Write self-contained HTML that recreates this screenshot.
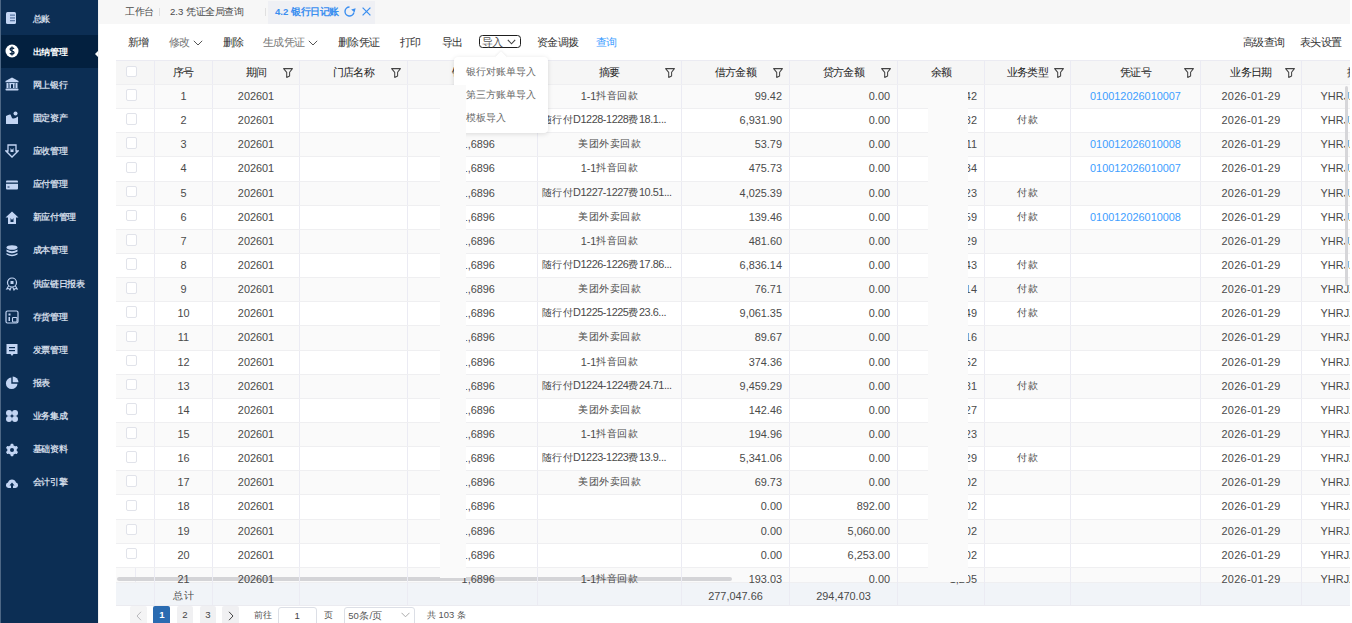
<!DOCTYPE html><html><head><meta charset="utf-8"><style>
*{box-sizing:border-box;margin:0;padding:0}
html,body{width:1352px;height:623px;overflow:hidden;background:#fff;font-family:"Liberation Sans",sans-serif;color:#333}
.a{position:absolute}
#sb{left:0;top:0;width:98px;height:623px;background:#0c2e54;border-left:1px solid #4d6785}
.si{position:absolute;left:0;width:97px;height:33px}
.si .t{position:absolute;left:31.8px;top:-0.3px;line-height:33px;font-size:9.46px;color:#cdd7e4;white-space:nowrap;font-weight:700}
.si.act{background:#03203f}
.si.act .t{color:#fff}
.si svg{position:absolute;left:4px;top:10px;width:14px;height:14px}
#tabs{left:98px;top:0;width:1254px;height:24px;background:#f7f7f7}
.tab{position:absolute;top:-0.5px;height:23px;line-height:23px;font-size:9.6px;color:#4a4a4a;white-space:nowrap;font-weight:500}
.sep{position:absolute;top:8px;width:1px;height:8px;background:#e0e0e0}
.tb{position:absolute;top:34px;line-height:16px;font-size:11px;color:#333;white-space:nowrap;font-weight:500}
.tbl{left:116px;top:60px;width:1233.5px;height:546px;overflow:hidden}
.hd{position:absolute;left:0;top:0;height:24px;width:1300px;background:#f6f6f6;border-top:1px solid #ebebf2}
.row{position:absolute;left:0;height:24.14px;width:1300px;border-top:1px solid #efeff1}
.c{position:absolute;top:0;height:100%;display:flex;align-items:center;justify-content:center;font-size:10.9px;color:#4a4a4a;white-space:nowrap;overflow:hidden;border-left:1px solid #ebebf3;padding-bottom:1px}
.c.r{justify-content:flex-end;padding-right:7px}
.hc{font-weight:500;color:#222;font-size:11px;padding-bottom:1px!important}
.cb{position:absolute;left:10px;top:4.2px;width:11px;height:11.5px;border:1px solid #e1e3ea;border-radius:2px;background:#fff}
.hd .cb{top:4.5px}
.blue{color:#409eff}
.z6{z-index:6}
.tot .c{padding-bottom:0;padding-top:4px}
.k{font-size:10px;letter-spacing:.5px}
.si .k{font-size:9px;letter-spacing:-.4px}
.tab .k{font-size:10px;letter-spacing:-.5px}
.tb .k{font-size:11px;letter-spacing:-.7px}
.hc .k{font-size:11px;letter-spacing:-.7px}
.pop .k{font-size:10px;letter-spacing:0}
.pg .k{font-size:9px;letter-spacing:-.1px}
.flt{position:absolute;top:6.6px;width:10px;height:10px}
</style></head><body>
<div id="sb" class="a">
<div class="si" style="top:1.80px"><svg style="left:3px;top:9px" viewBox="0 0 14 14"><rect x="2" y="1" width="10" height="12" rx="1.5" fill="#c3d5f3"/><rect x="6" y="3.5" width="5" height="1.3" fill="#5d7aa6"/><rect x="6" y="6.3" width="5" height="1.3" fill="#5d7aa6"/><rect x="6" y="9" width="5" height="1.3" fill="#5d7aa6"/></svg><span class="t"><span class="k">总账</span></span></div>
<div class="si act" style="top:34.94px"><svg style="left:3.5px;top:9.5px" viewBox="0 0 14 14"><circle cx="7" cy="7" r="6.5" fill="#fff"/><path d="M9 4.9 C8.6 4.1 7.9 3.8 7 3.8 C5.9 3.8 5.1 4.4 5.1 5.3 C5.1 7.2 9.0 6.5 9.0 8.6 C9.0 9.6 8.1 10.2 7 10.2 C6.1 10.2 5.3 9.8 4.9 9.1 M7 2.6 V11.4" fill="none" stroke="#03203f" stroke-width="1.3"/></svg><span class="t"><span class="k">出纳管理</span></span></div>
<div class="si" style="top:68.08px"><svg style="top:9px" viewBox="0 0 14 14"><path d="M7 0.5 L13.5 4 L13.5 5.2 L0.5 5.2 L0.5 4 Z" fill="#c3d5f3"/><rect x="1.5" y="6" width="2" height="5" fill="#c3d5f3"/><rect x="4.5" y="6" width="1.5" height="5" fill="#c3d5f3"/><rect x="8" y="6" width="1.5" height="5" fill="#c3d5f3"/><rect x="10.5" y="6" width="2" height="5" fill="#c3d5f3"/><rect x="4.5" y="6" width="5" height="1.2" fill="#c3d5f3"/><rect x="0.5" y="11.5" width="13" height="2" rx="0.8" fill="#c3d5f3"/></svg><span class="t"><span class="k">网上银行</span></span></div>
<div class="si" style="top:101.22px"><svg viewBox="0 0 14 14"><path d="M1 5 Q4 3 5.5 3.5 L7 7 Q9 8.5 13 5.5 L13 12.5 Q13 13 12.5 13 L1.5 13 Q1 13 1 12.5 Z" fill="#c3d5f3"/><circle cx="10.5" cy="2.5" r="2" fill="#c3d5f3"/></svg><span class="t"><span class="k">固定资产</span></span></div>
<div class="si" style="top:134.36px"><svg viewBox="0 0 14 14"><path d="M3 1 L11 1 L11 7 L13 7 L7 13 L1 7 L3 7 Z" fill="none" stroke="#c3d5f3" stroke-width="1.3"/><path d="M5.5 4 L7 6 L8.5 4 L8.5 8 L5.5 8 Z" fill="#c3d5f3"/></svg><span class="t"><span class="k">应收管理</span></span></div>
<div class="si" style="top:167.50px"><svg viewBox="0 0 14 14"><rect x="1" y="2.5" width="12" height="9" rx="1" fill="#c3d5f3"/><rect x="1" y="4.5" width="12" height="1.3" fill="#0c2e54"/><rect x="2.5" y="8.5" width="2" height="1" fill="#0c2e54"/></svg><span class="t"><span class="k">应付管理</span></span></div>
<div class="si" style="top:200.64px"><svg viewBox="0 0 14 14"><path d="M7 0.5 L13.5 6.5 L11 6.5 L11 13 L3 13 L3 6.5 L0.5 6.5 Z" fill="#c3d5f3"/><path d="M5.5 7 L7 9 L8.5 7 L8.5 11 L5.5 11 Z" fill="#0c2e54"/></svg><span class="t"><span class="k">新应付管理</span></span></div>
<div class="si" style="top:233.78px"><svg viewBox="0 0 14 14"><ellipse cx="7" cy="3.5" rx="5.5" ry="2.3" fill="#c3d5f3"/><path d="M1.5 5.5 Q7 9 12.5 5.5 L12.5 7.5 Q7 11 1.5 7.5Z" fill="#c3d5f3"/><path d="M1.5 9 Q7 12.5 12.5 9 L12.5 10.5 Q7 14 1.5 10.5Z" fill="#c3d5f3"/></svg><span class="t"><span class="k">成本管理</span></span></div>
<div class="si" style="top:266.92px"><svg viewBox="0 0 14 14"><circle cx="7" cy="5.5" r="4.5" fill="none" stroke="#c3d5f3" stroke-width="1.2"/><rect x="5.5" y="4" width="3" height="3" fill="#c3d5f3"/><path d="M3.8 8.5 L1.8 12 L4 11.5 L5 13 L6.3 10" fill="none" stroke="#c3d5f3" stroke-width="1.1"/><path d="M10.2 8.5 L12.2 12 L10 11.5 L9 13 L7.7 10" fill="none" stroke="#c3d5f3" stroke-width="1.1"/></svg><span class="t"><span class="k">供应链日报表</span></span></div>
<div class="si" style="top:300.06px"><svg viewBox="0 0 14 14"><rect x="1" y="1" width="12" height="12" rx="1.5" fill="none" stroke="#c3d5f3" stroke-width="1.2"/><rect x="3.5" y="3.5" width="2" height="2" fill="#c3d5f3"/><rect x="3.5" y="7" width="1.5" height="4" fill="#c3d5f3"/><rect x="7.5" y="7.5" width="4.5" height="4.5" rx="0.8" fill="none" stroke="#c3d5f3" stroke-width="1.1"/></svg><span class="t"><span class="k">存货管理</span></span></div>
<div class="si" style="top:333.20px"><svg viewBox="0 0 14 14"><path d="M1.5 1 L12.5 1 L12.5 11 L8.5 11 L7 13 L5.5 11 L1.5 11 Z" fill="#c3d5f3"/><rect x="4" y="4" width="6" height="1.2" fill="#0c2e54"/><rect x="4" y="7" width="6" height="1.2" fill="#0c2e54"/></svg><span class="t"><span class="k">发票管理</span></span></div>
<div class="si" style="top:366.34px"><svg viewBox="0 0 14 14"><path d="M6.3 1.5 A5.8 5.8 0 1 0 12.5 7.7 L6.3 7.7 Z" fill="#c3d5f3"/><path d="M7.7 0.5 A5.8 5.8 0 0 1 13.5 6.3 L7.7 6.3 Z" fill="#c3d5f3"/></svg><span class="t"><span class="k">报表</span></span></div>
<div class="si" style="top:399.48px"><svg viewBox="0 0 14 14"><circle cx="4" cy="4" r="3" fill="#c3d5f3"/><circle cx="10" cy="4" r="3" fill="#c3d5f3"/><circle cx="4" cy="10" r="3" fill="#c3d5f3"/><circle cx="10" cy="10" r="3" fill="#c3d5f3"/></svg><span class="t"><span class="k">业务集成</span></span></div>
<div class="si" style="top:432.62px"><svg viewBox="0 0 14 14"><g fill="#c3d5f3"><circle cx="7" cy="7" r="4.8"/><rect x="5.6" y="0.8" width="2.8" height="12.4" rx="0.6"/><rect x="5.6" y="0.8" width="2.8" height="12.4" rx="0.6" transform="rotate(60 7 7)"/><rect x="5.6" y="0.8" width="2.8" height="12.4" rx="0.6" transform="rotate(120 7 7)"/></g><circle cx="7" cy="7" r="2" fill="#0c2e54"/></svg><span class="t"><span class="k">基础资料</span></span></div>
<div class="si" style="top:465.76px"><svg viewBox="0 0 14 14"><path d="M3.5 12 A2.8 2.8 0 0 1 3 6.5 A4.2 4.2 0 0 1 11 6.5 A2.8 2.8 0 0 1 10.5 12 Z" fill="#c3d5f3"/><path d="M7 6.5 L4.5 9.5 L6 9.5 L6 12 L8 12 L8 9.5 L9.5 9.5 Z" fill="#0c2e54"/></svg><span class="t"><span class="k">会计引擎</span></span></div>
<svg class="a" style="left:92.5px;top:48.8px" width="6" height="10" viewBox="0 0 6 10"><path d="M6 0 L1 5 L6 10 Z" fill="#fff"/></svg>
</div>
<div id="tabs" class="a">
<div class="tab" style="left:27px"><span class="k">工作台</span></div><div class="sep" style="left:61px"></div>
<div class="tab" style="left:72px">2.3 <span class="k">凭证全局查询</span></div><div class="sep" style="left:167px"></div>
<div class="a" style="left:170px;top:1px;width:107px;height:23px;background:#eff0f4"></div>
<div class="tab" style="left:177px;color:#3a8ef0;font-weight:700">4.2 <span class="k">银行日记账</span></div>
<svg class="a" style="left:245px;top:5px" width="13" height="13" viewBox="0 0 13 13"><path d="M6.5 2 A4.5 4.5 0 1 0 10.9 7.5" fill="none" stroke="#3a8ef0" stroke-width="1.4"/><path d="M8.2 4.6 L12.6 3.2 L11.6 7.6 Z" fill="#3a8ef0"/></svg>
<svg class="a" style="left:264px;top:7px" width="9" height="9" viewBox="0 0 9 9"><path d="M0.6 0.6 L8.4 8.4 M8.4 0.6 L0.6 8.4" stroke="#3a8ef0" stroke-width="1.25"/></svg>
</div>
<div class="tb" style="left:128px"><span class="k">新增</span></div>
<div class="tb" style="left:169px;color:#767676"><span class="k">修改</span></div>
<div class="tb" style="left:223px"><span class="k">删除</span></div>
<div class="tb" style="left:263px;color:#767676"><span class="k">生成凭证</span></div>
<div class="tb" style="left:338px"><span class="k">删除凭证</span></div>
<div class="tb" style="left:400px"><span class="k">打印</span></div>
<div class="tb" style="left:442px"><span class="k">导出</span></div>
<div class="tb" style="left:537px"><span class="k">资金调拨</span></div>
<div class="tb" style="left:1243px"><span class="k">高级查询</span></div>
<div class="tb" style="left:1300px"><span class="k">表头设置</span></div>
<svg class="a" style="left:192.8px;top:39.5px" width="10" height="6" viewBox="0 0 10 6"><path d="M0.8 0.8 L5 5 L9.2 0.8" fill="none" stroke="#555" stroke-width="1"/></svg>
<svg class="a" style="left:307.8px;top:39.5px" width="10" height="6" viewBox="0 0 10 6"><path d="M0.8 0.8 L5 5 L9.2 0.8" fill="none" stroke="#555" stroke-width="1"/></svg>
<div class="tb" style="left:596px;color:#409eff"><span class="k">查询</span></div>
<div class="a" style="left:479.2px;top:34.8px;width:42.3px;height:13.3px;border:1.8px solid #1e1e1e;border-radius:3.5px"></div>
<div class="tb" style="left:482px;color:#555"><span class="k">导入</span></div>
<svg class="a" style="left:506.5px;top:38.5px" width="9" height="6" viewBox="0 0 9 6"><path d="M0.8 0.8 L4.5 4.8 L8.2 0.8" fill="none" stroke="#444" stroke-width="1.1"/></svg>
<div class="a tbl">
<div class="hd"><div class="c hc" style="left:0.0px;width:38.0px;border-left:none;"><div class="cb"></div></div><div class="c hc" style="left:38.0px;width:58.0px;"><span class="k">序号</span></div><div class="c hc" style="left:96.0px;width:87.0px;"><span class="k">期间</span></div><div class="c hc" style="left:183.0px;width:108.0px;"><span class="k">门店名称</span></div><div class="c hc" style="left:291.0px;width:130.0px;"><span class="k">银行账号</span></div><div class="c hc" style="left:421.0px;width:144.0px;"><span class="k">摘要</span></div><div class="c hc" style="left:565.0px;width:108.0px;"><span class="k">借方金额</span></div><div class="c hc" style="left:673.0px;width:108.0px;"><span class="k">贷方金额</span></div><div class="c hc" style="left:781.0px;width:87.0px;"><span class="k">余额</span></div><div class="c hc" style="left:868.0px;width:86.0px;"><span class="k">业务类型</span></div><div class="c hc" style="left:954.0px;width:130.0px;"><span class="k">凭证号</span></div><div class="c hc" style="left:1084.0px;width:101.0px;"><span class="k">业务日期</span></div><div class="c hc" style="left:1185.0px;width:119.0px;justify-content:flex-start;padding-left:44.5px;"><span class="k">摘要</span></div>
<svg class="flt" style="left:166.5px" viewBox="0 0 10 10"><path d="M0.6 0.6 H9.4 L6.6 4.3 V8.1 L3.7 9.4 V4.3 Z" fill="none" stroke="#444" stroke-width="1.05" stroke-linejoin="round"/></svg>
<svg class="flt" style="left:274.5px" viewBox="0 0 10 10"><path d="M0.6 0.6 H9.4 L6.6 4.3 V8.1 L3.7 9.4 V4.3 Z" fill="none" stroke="#444" stroke-width="1.05" stroke-linejoin="round"/></svg>
<svg class="flt" style="left:548.5px" viewBox="0 0 10 10"><path d="M0.6 0.6 H9.4 L6.6 4.3 V8.1 L3.7 9.4 V4.3 Z" fill="none" stroke="#444" stroke-width="1.05" stroke-linejoin="round"/></svg>
<svg class="flt" style="left:656.5px" viewBox="0 0 10 10"><path d="M0.6 0.6 H9.4 L6.6 4.3 V8.1 L3.7 9.4 V4.3 Z" fill="none" stroke="#444" stroke-width="1.05" stroke-linejoin="round"/></svg>
<svg class="flt" style="left:764.5px" viewBox="0 0 10 10"><path d="M0.6 0.6 H9.4 L6.6 4.3 V8.1 L3.7 9.4 V4.3 Z" fill="none" stroke="#444" stroke-width="1.05" stroke-linejoin="round"/></svg>
<svg class="flt" style="left:937.5px" viewBox="0 0 10 10"><path d="M0.6 0.6 H9.4 L6.6 4.3 V8.1 L3.7 9.4 V4.3 Z" fill="none" stroke="#444" stroke-width="1.05" stroke-linejoin="round"/></svg>
<svg class="flt" style="left:1067.5px" viewBox="0 0 10 10"><path d="M0.6 0.6 H9.4 L6.6 4.3 V8.1 L3.7 9.4 V4.3 Z" fill="none" stroke="#444" stroke-width="1.05" stroke-linejoin="round"/></svg>
<svg class="flt" style="left:1168.5px" viewBox="0 0 10 10"><path d="M0.6 0.6 H9.4 L6.6 4.3 V8.1 L3.7 9.4 V4.3 Z" fill="none" stroke="#444" stroke-width="1.05" stroke-linejoin="round"/></svg>
</div>
<div class="row" style="top:24.00px;background:#fafafa"><div class="c" style="left:0.0px;width:38.0px;border-left:none;"><div class="cb"></div></div><div class="c" style="left:38.0px;width:58.0px;">1</div><div class="c" style="left:96.0px;width:87.0px;">202601</div><div class="c" style="left:183.0px;width:108.0px;"></div><div class="c" style="left:291.0px;width:130.0px;"><span style="position:absolute;left:53.6px">1,6896</span></div><div class="c" style="left:421.0px;width:144.0px;">1-1<span class="k">抖音回款</span></div><div class="c r" style="left:565.0px;width:108.0px;">99.42</div><div class="c r" style="left:673.0px;width:108.0px;">0.00</div><div class="c r" style="left:781.0px;width:87.0px;">1,242</div><div class="c" style="left:868.0px;width:86.0px;"></div><div class="c" style="left:954.0px;width:130.0px;"><span class="blue">010012026010007</span></div><div class="c" style="left:1084.0px;width:101.0px;"><span style="letter-spacing:.35px">2026-01-29</span></div><div class="c" style="left:1185.0px;width:119.0px;justify-content:flex-start;padding-left:18.5px;"><span style="letter-spacing:.1px">YHRJZ2026</span></div></div>
<div class="row" style="top:48.14px;background:#fff"><div class="c" style="left:0.0px;width:38.0px;border-left:none;"><div class="cb"></div></div><div class="c" style="left:38.0px;width:58.0px;">2</div><div class="c" style="left:96.0px;width:87.0px;">202601</div><div class="c" style="left:183.0px;width:108.0px;"></div><div class="c" style="left:291.0px;width:130.0px;"><span style="position:absolute;left:53.6px">1,6896</span></div><div class="c" style="left:421.0px;width:144.0px;"><span style="position:absolute;left:3.5px;letter-spacing:-0.45px"><span class="k">随行付</span>D1228-1228<span class="k">费</span>18.1...</span></div><div class="c r" style="left:565.0px;width:108.0px;">6,931.90</div><div class="c r" style="left:673.0px;width:108.0px;">0.00</div><div class="c r" style="left:781.0px;width:87.0px;">1,232</div><div class="c" style="left:868.0px;width:86.0px;"><span class="k">付款</span></div><div class="c" style="left:954.0px;width:130.0px;"><span class="blue"></span></div><div class="c" style="left:1084.0px;width:101.0px;"><span style="letter-spacing:.35px">2026-01-29</span></div><div class="c" style="left:1185.0px;width:119.0px;justify-content:flex-start;padding-left:18.5px;"><span style="letter-spacing:.1px">YHRJZ2026</span></div></div>
<div class="row" style="top:72.28px;background:#fafafa"><div class="c" style="left:0.0px;width:38.0px;border-left:none;"><div class="cb"></div></div><div class="c" style="left:38.0px;width:58.0px;">3</div><div class="c" style="left:96.0px;width:87.0px;">202601</div><div class="c" style="left:183.0px;width:108.0px;"></div><div class="c" style="left:291.0px;width:130.0px;"><span style="position:absolute;left:53.6px">1,6896</span></div><div class="c" style="left:421.0px;width:144.0px;"><span class="k">美团外卖回款</span></div><div class="c r" style="left:565.0px;width:108.0px;">53.79</div><div class="c r" style="left:673.0px;width:108.0px;">0.00</div><div class="c r" style="left:781.0px;width:87.0px;">1,211</div><div class="c" style="left:868.0px;width:86.0px;"></div><div class="c" style="left:954.0px;width:130.0px;"><span class="blue">010012026010008</span></div><div class="c" style="left:1084.0px;width:101.0px;"><span style="letter-spacing:.35px">2026-01-29</span></div><div class="c" style="left:1185.0px;width:119.0px;justify-content:flex-start;padding-left:18.5px;"><span style="letter-spacing:.1px">YHRJZ2026</span></div></div>
<div class="row" style="top:96.42px;background:#fff"><div class="c" style="left:0.0px;width:38.0px;border-left:none;"><div class="cb"></div></div><div class="c" style="left:38.0px;width:58.0px;">4</div><div class="c" style="left:96.0px;width:87.0px;">202601</div><div class="c" style="left:183.0px;width:108.0px;"></div><div class="c" style="left:291.0px;width:130.0px;"><span style="position:absolute;left:53.6px">1,6896</span></div><div class="c" style="left:421.0px;width:144.0px;">1-1<span class="k">抖音回款</span></div><div class="c r" style="left:565.0px;width:108.0px;">475.73</div><div class="c r" style="left:673.0px;width:108.0px;">0.00</div><div class="c r" style="left:781.0px;width:87.0px;">1,234</div><div class="c" style="left:868.0px;width:86.0px;"></div><div class="c" style="left:954.0px;width:130.0px;"><span class="blue">010012026010007</span></div><div class="c" style="left:1084.0px;width:101.0px;"><span style="letter-spacing:.35px">2026-01-29</span></div><div class="c" style="left:1185.0px;width:119.0px;justify-content:flex-start;padding-left:18.5px;"><span style="letter-spacing:.1px">YHRJZ2026</span></div></div>
<div class="row" style="top:120.56px;background:#fafafa"><div class="c" style="left:0.0px;width:38.0px;border-left:none;"><div class="cb"></div></div><div class="c" style="left:38.0px;width:58.0px;">5</div><div class="c" style="left:96.0px;width:87.0px;">202601</div><div class="c" style="left:183.0px;width:108.0px;"></div><div class="c" style="left:291.0px;width:130.0px;"><span style="position:absolute;left:53.6px">1,6896</span></div><div class="c" style="left:421.0px;width:144.0px;"><span style="position:absolute;left:3.5px;letter-spacing:-0.45px"><span class="k">随行付</span>D1227-1227<span class="k">费</span>10.51...</span></div><div class="c r" style="left:565.0px;width:108.0px;">4,025.39</div><div class="c r" style="left:673.0px;width:108.0px;">0.00</div><div class="c r" style="left:781.0px;width:87.0px;">1,223</div><div class="c" style="left:868.0px;width:86.0px;"><span class="k">付款</span></div><div class="c" style="left:954.0px;width:130.0px;"><span class="blue"></span></div><div class="c" style="left:1084.0px;width:101.0px;"><span style="letter-spacing:.35px">2026-01-29</span></div><div class="c" style="left:1185.0px;width:119.0px;justify-content:flex-start;padding-left:18.5px;"><span style="letter-spacing:.1px">YHRJZ2026</span></div></div>
<div class="row" style="top:144.70px;background:#fff"><div class="c" style="left:0.0px;width:38.0px;border-left:none;"><div class="cb"></div></div><div class="c" style="left:38.0px;width:58.0px;">6</div><div class="c" style="left:96.0px;width:87.0px;">202601</div><div class="c" style="left:183.0px;width:108.0px;"></div><div class="c" style="left:291.0px;width:130.0px;"><span style="position:absolute;left:53.6px">1,6896</span></div><div class="c" style="left:421.0px;width:144.0px;"><span class="k">美团外卖回款</span></div><div class="c r" style="left:565.0px;width:108.0px;">139.46</div><div class="c r" style="left:673.0px;width:108.0px;">0.00</div><div class="c r" style="left:781.0px;width:87.0px;">1,259</div><div class="c" style="left:868.0px;width:86.0px;"><span class="k">付款</span></div><div class="c" style="left:954.0px;width:130.0px;"><span class="blue">010012026010008</span></div><div class="c" style="left:1084.0px;width:101.0px;"><span style="letter-spacing:.35px">2026-01-29</span></div><div class="c" style="left:1185.0px;width:119.0px;justify-content:flex-start;padding-left:18.5px;"><span style="letter-spacing:.1px">YHRJZ2026</span></div></div>
<div class="row" style="top:168.84px;background:#fafafa"><div class="c" style="left:0.0px;width:38.0px;border-left:none;"><div class="cb"></div></div><div class="c" style="left:38.0px;width:58.0px;">7</div><div class="c" style="left:96.0px;width:87.0px;">202601</div><div class="c" style="left:183.0px;width:108.0px;"></div><div class="c" style="left:291.0px;width:130.0px;"><span style="position:absolute;left:53.6px">1,6896</span></div><div class="c" style="left:421.0px;width:144.0px;">1-1<span class="k">抖音回款</span></div><div class="c r" style="left:565.0px;width:108.0px;">481.60</div><div class="c r" style="left:673.0px;width:108.0px;">0.00</div><div class="c r" style="left:781.0px;width:87.0px;">1,229</div><div class="c" style="left:868.0px;width:86.0px;"></div><div class="c" style="left:954.0px;width:130.0px;"><span class="blue"></span></div><div class="c" style="left:1084.0px;width:101.0px;"><span style="letter-spacing:.35px">2026-01-29</span></div><div class="c" style="left:1185.0px;width:119.0px;justify-content:flex-start;padding-left:18.5px;"><span style="letter-spacing:.1px">YHRJZ2026</span></div></div>
<div class="row" style="top:192.98px;background:#fff"><div class="c" style="left:0.0px;width:38.0px;border-left:none;"><div class="cb"></div></div><div class="c" style="left:38.0px;width:58.0px;">8</div><div class="c" style="left:96.0px;width:87.0px;">202601</div><div class="c" style="left:183.0px;width:108.0px;"></div><div class="c" style="left:291.0px;width:130.0px;"><span style="position:absolute;left:53.6px">1,6896</span></div><div class="c" style="left:421.0px;width:144.0px;"><span style="position:absolute;left:3.5px;letter-spacing:-0.45px"><span class="k">随行付</span>D1226-1226<span class="k">费</span>17.86...</span></div><div class="c r" style="left:565.0px;width:108.0px;">6,836.14</div><div class="c r" style="left:673.0px;width:108.0px;">0.00</div><div class="c r" style="left:781.0px;width:87.0px;">1,243</div><div class="c" style="left:868.0px;width:86.0px;"><span class="k">付款</span></div><div class="c" style="left:954.0px;width:130.0px;"><span class="blue"></span></div><div class="c" style="left:1084.0px;width:101.0px;"><span style="letter-spacing:.35px">2026-01-29</span></div><div class="c" style="left:1185.0px;width:119.0px;justify-content:flex-start;padding-left:18.5px;"><span style="letter-spacing:.1px">YHRJZ2026</span></div></div>
<div class="row" style="top:217.12px;background:#fafafa"><div class="c" style="left:0.0px;width:38.0px;border-left:none;"><div class="cb"></div></div><div class="c" style="left:38.0px;width:58.0px;">9</div><div class="c" style="left:96.0px;width:87.0px;">202601</div><div class="c" style="left:183.0px;width:108.0px;"></div><div class="c" style="left:291.0px;width:130.0px;"><span style="position:absolute;left:53.6px">1,6896</span></div><div class="c" style="left:421.0px;width:144.0px;"><span class="k">美团外卖回款</span></div><div class="c r" style="left:565.0px;width:108.0px;">76.71</div><div class="c r" style="left:673.0px;width:108.0px;">0.00</div><div class="c r" style="left:781.0px;width:87.0px;">1,214</div><div class="c" style="left:868.0px;width:86.0px;"><span class="k">付款</span></div><div class="c" style="left:954.0px;width:130.0px;"><span class="blue"></span></div><div class="c" style="left:1084.0px;width:101.0px;"><span style="letter-spacing:.35px">2026-01-29</span></div><div class="c" style="left:1185.0px;width:119.0px;justify-content:flex-start;padding-left:18.5px;"><span style="letter-spacing:.1px">YHRJZ2026</span></div></div>
<div class="row" style="top:241.26px;background:#fff"><div class="c" style="left:0.0px;width:38.0px;border-left:none;"><div class="cb"></div></div><div class="c" style="left:38.0px;width:58.0px;">10</div><div class="c" style="left:96.0px;width:87.0px;">202601</div><div class="c" style="left:183.0px;width:108.0px;"></div><div class="c" style="left:291.0px;width:130.0px;"><span style="position:absolute;left:53.6px">1,6896</span></div><div class="c" style="left:421.0px;width:144.0px;"><span style="position:absolute;left:3.5px;letter-spacing:-0.45px"><span class="k">随行付</span>D1225-1225<span class="k">费</span>23.6...</span></div><div class="c r" style="left:565.0px;width:108.0px;">9,061.35</div><div class="c r" style="left:673.0px;width:108.0px;">0.00</div><div class="c r" style="left:781.0px;width:87.0px;">1,249</div><div class="c" style="left:868.0px;width:86.0px;"><span class="k">付款</span></div><div class="c" style="left:954.0px;width:130.0px;"><span class="blue"></span></div><div class="c" style="left:1084.0px;width:101.0px;"><span style="letter-spacing:.35px">2026-01-29</span></div><div class="c" style="left:1185.0px;width:119.0px;justify-content:flex-start;padding-left:18.5px;"><span style="letter-spacing:.1px">YHRJZ2026</span></div></div>
<div class="row" style="top:265.40px;background:#fafafa"><div class="c" style="left:0.0px;width:38.0px;border-left:none;"><div class="cb"></div></div><div class="c" style="left:38.0px;width:58.0px;">11</div><div class="c" style="left:96.0px;width:87.0px;">202601</div><div class="c" style="left:183.0px;width:108.0px;"></div><div class="c" style="left:291.0px;width:130.0px;"><span style="position:absolute;left:53.6px">1,6896</span></div><div class="c" style="left:421.0px;width:144.0px;"><span class="k">美团外卖回款</span></div><div class="c r" style="left:565.0px;width:108.0px;">89.67</div><div class="c r" style="left:673.0px;width:108.0px;">0.00</div><div class="c r" style="left:781.0px;width:87.0px;">1,216</div><div class="c" style="left:868.0px;width:86.0px;"></div><div class="c" style="left:954.0px;width:130.0px;"><span class="blue"></span></div><div class="c" style="left:1084.0px;width:101.0px;"><span style="letter-spacing:.35px">2026-01-29</span></div><div class="c" style="left:1185.0px;width:119.0px;justify-content:flex-start;padding-left:18.5px;"><span style="letter-spacing:.1px">YHRJZ2026</span></div></div>
<div class="row" style="top:289.54px;background:#fff"><div class="c" style="left:0.0px;width:38.0px;border-left:none;"><div class="cb"></div></div><div class="c" style="left:38.0px;width:58.0px;">12</div><div class="c" style="left:96.0px;width:87.0px;">202601</div><div class="c" style="left:183.0px;width:108.0px;"></div><div class="c" style="left:291.0px;width:130.0px;"><span style="position:absolute;left:53.6px">1,6896</span></div><div class="c" style="left:421.0px;width:144.0px;">1-1<span class="k">抖音回款</span></div><div class="c r" style="left:565.0px;width:108.0px;">374.36</div><div class="c r" style="left:673.0px;width:108.0px;">0.00</div><div class="c r" style="left:781.0px;width:87.0px;">1,252</div><div class="c" style="left:868.0px;width:86.0px;"></div><div class="c" style="left:954.0px;width:130.0px;"><span class="blue"></span></div><div class="c" style="left:1084.0px;width:101.0px;"><span style="letter-spacing:.35px">2026-01-29</span></div><div class="c" style="left:1185.0px;width:119.0px;justify-content:flex-start;padding-left:18.5px;"><span style="letter-spacing:.1px">YHRJZ2026</span></div></div>
<div class="row" style="top:313.68px;background:#fafafa"><div class="c" style="left:0.0px;width:38.0px;border-left:none;"><div class="cb"></div></div><div class="c" style="left:38.0px;width:58.0px;">13</div><div class="c" style="left:96.0px;width:87.0px;">202601</div><div class="c" style="left:183.0px;width:108.0px;"></div><div class="c" style="left:291.0px;width:130.0px;"><span style="position:absolute;left:53.6px">1,6896</span></div><div class="c" style="left:421.0px;width:144.0px;"><span style="position:absolute;left:3.5px;letter-spacing:-0.45px"><span class="k">随行付</span>D1224-1224<span class="k">费</span>24.71...</span></div><div class="c r" style="left:565.0px;width:108.0px;">9,459.29</div><div class="c r" style="left:673.0px;width:108.0px;">0.00</div><div class="c r" style="left:781.0px;width:87.0px;">1,281</div><div class="c" style="left:868.0px;width:86.0px;"><span class="k">付款</span></div><div class="c" style="left:954.0px;width:130.0px;"><span class="blue"></span></div><div class="c" style="left:1084.0px;width:101.0px;"><span style="letter-spacing:.35px">2026-01-29</span></div><div class="c" style="left:1185.0px;width:119.0px;justify-content:flex-start;padding-left:18.5px;"><span style="letter-spacing:.1px">YHRJZ2026</span></div></div>
<div class="row" style="top:337.82px;background:#fff"><div class="c" style="left:0.0px;width:38.0px;border-left:none;"><div class="cb"></div></div><div class="c" style="left:38.0px;width:58.0px;">14</div><div class="c" style="left:96.0px;width:87.0px;">202601</div><div class="c" style="left:183.0px;width:108.0px;"></div><div class="c" style="left:291.0px;width:130.0px;"><span style="position:absolute;left:53.6px">1,6896</span></div><div class="c" style="left:421.0px;width:144.0px;"><span class="k">美团外卖回款</span></div><div class="c r" style="left:565.0px;width:108.0px;">142.46</div><div class="c r" style="left:673.0px;width:108.0px;">0.00</div><div class="c r" style="left:781.0px;width:87.0px;">1,227</div><div class="c" style="left:868.0px;width:86.0px;"></div><div class="c" style="left:954.0px;width:130.0px;"><span class="blue"></span></div><div class="c" style="left:1084.0px;width:101.0px;"><span style="letter-spacing:.35px">2026-01-29</span></div><div class="c" style="left:1185.0px;width:119.0px;justify-content:flex-start;padding-left:18.5px;"><span style="letter-spacing:.1px">YHRJZ2026</span></div></div>
<div class="row" style="top:361.96px;background:#fafafa"><div class="c" style="left:0.0px;width:38.0px;border-left:none;"><div class="cb"></div></div><div class="c" style="left:38.0px;width:58.0px;">15</div><div class="c" style="left:96.0px;width:87.0px;">202601</div><div class="c" style="left:183.0px;width:108.0px;"></div><div class="c" style="left:291.0px;width:130.0px;"><span style="position:absolute;left:53.6px">1,6896</span></div><div class="c" style="left:421.0px;width:144.0px;">1-1<span class="k">抖音回款</span></div><div class="c r" style="left:565.0px;width:108.0px;">194.96</div><div class="c r" style="left:673.0px;width:108.0px;">0.00</div><div class="c r" style="left:781.0px;width:87.0px;">1,223</div><div class="c" style="left:868.0px;width:86.0px;"></div><div class="c" style="left:954.0px;width:130.0px;"><span class="blue"></span></div><div class="c" style="left:1084.0px;width:101.0px;"><span style="letter-spacing:.35px">2026-01-29</span></div><div class="c" style="left:1185.0px;width:119.0px;justify-content:flex-start;padding-left:18.5px;"><span style="letter-spacing:.1px">YHRJZ2026</span></div></div>
<div class="row" style="top:386.10px;background:#fff"><div class="c" style="left:0.0px;width:38.0px;border-left:none;"><div class="cb"></div></div><div class="c" style="left:38.0px;width:58.0px;">16</div><div class="c" style="left:96.0px;width:87.0px;">202601</div><div class="c" style="left:183.0px;width:108.0px;"></div><div class="c" style="left:291.0px;width:130.0px;"><span style="position:absolute;left:53.6px">1,6896</span></div><div class="c" style="left:421.0px;width:144.0px;"><span style="position:absolute;left:3.5px;letter-spacing:-0.45px"><span class="k">随行付</span>D1223-1223<span class="k">费</span>13.9...</span></div><div class="c r" style="left:565.0px;width:108.0px;">5,341.06</div><div class="c r" style="left:673.0px;width:108.0px;">0.00</div><div class="c r" style="left:781.0px;width:87.0px;">1,229</div><div class="c" style="left:868.0px;width:86.0px;"><span class="k">付款</span></div><div class="c" style="left:954.0px;width:130.0px;"><span class="blue"></span></div><div class="c" style="left:1084.0px;width:101.0px;"><span style="letter-spacing:.35px">2026-01-29</span></div><div class="c" style="left:1185.0px;width:119.0px;justify-content:flex-start;padding-left:18.5px;"><span style="letter-spacing:.1px">YHRJZ2026</span></div></div>
<div class="row" style="top:410.24px;background:#fafafa"><div class="c" style="left:0.0px;width:38.0px;border-left:none;"><div class="cb"></div></div><div class="c" style="left:38.0px;width:58.0px;">17</div><div class="c" style="left:96.0px;width:87.0px;">202601</div><div class="c" style="left:183.0px;width:108.0px;"></div><div class="c" style="left:291.0px;width:130.0px;"><span style="position:absolute;left:53.6px">1,6896</span></div><div class="c" style="left:421.0px;width:144.0px;"><span class="k">美团外卖回款</span></div><div class="c r" style="left:565.0px;width:108.0px;">69.73</div><div class="c r" style="left:673.0px;width:108.0px;">0.00</div><div class="c r" style="left:781.0px;width:87.0px;">1,202</div><div class="c" style="left:868.0px;width:86.0px;"></div><div class="c" style="left:954.0px;width:130.0px;"><span class="blue"></span></div><div class="c" style="left:1084.0px;width:101.0px;"><span style="letter-spacing:.35px">2026-01-29</span></div><div class="c" style="left:1185.0px;width:119.0px;justify-content:flex-start;padding-left:18.5px;"><span style="letter-spacing:.1px">YHRJZ2026</span></div></div>
<div class="row" style="top:434.38px;background:#fff"><div class="c" style="left:0.0px;width:38.0px;border-left:none;"><div class="cb"></div></div><div class="c" style="left:38.0px;width:58.0px;">18</div><div class="c" style="left:96.0px;width:87.0px;">202601</div><div class="c" style="left:183.0px;width:108.0px;"></div><div class="c" style="left:291.0px;width:130.0px;"><span style="position:absolute;left:53.6px">1,6896</span></div><div class="c" style="left:421.0px;width:144.0px;"></div><div class="c r" style="left:565.0px;width:108.0px;">0.00</div><div class="c r" style="left:673.0px;width:108.0px;">892.00</div><div class="c r" style="left:781.0px;width:87.0px;">1,202</div><div class="c" style="left:868.0px;width:86.0px;"></div><div class="c" style="left:954.0px;width:130.0px;"><span class="blue"></span></div><div class="c" style="left:1084.0px;width:101.0px;"><span style="letter-spacing:.35px">2026-01-29</span></div><div class="c" style="left:1185.0px;width:119.0px;justify-content:flex-start;padding-left:18.5px;"><span style="letter-spacing:.1px">YHRJZ2026</span></div></div>
<div class="row" style="top:458.52px;background:#fafafa"><div class="c" style="left:0.0px;width:38.0px;border-left:none;"><div class="cb"></div></div><div class="c" style="left:38.0px;width:58.0px;">19</div><div class="c" style="left:96.0px;width:87.0px;">202601</div><div class="c" style="left:183.0px;width:108.0px;"></div><div class="c" style="left:291.0px;width:130.0px;"><span style="position:absolute;left:53.6px">1,6896</span></div><div class="c" style="left:421.0px;width:144.0px;"></div><div class="c r" style="left:565.0px;width:108.0px;">0.00</div><div class="c r" style="left:673.0px;width:108.0px;">5,060.00</div><div class="c r" style="left:781.0px;width:87.0px;">1,202</div><div class="c" style="left:868.0px;width:86.0px;"></div><div class="c" style="left:954.0px;width:130.0px;"><span class="blue"></span></div><div class="c" style="left:1084.0px;width:101.0px;"><span style="letter-spacing:.35px">2026-01-29</span></div><div class="c" style="left:1185.0px;width:119.0px;justify-content:flex-start;padding-left:18.5px;"><span style="letter-spacing:.1px">YHRJZ2026</span></div></div>
<div class="row" style="top:482.66px;background:#fff"><div class="c" style="left:0.0px;width:38.0px;border-left:none;"><div class="cb"></div></div><div class="c" style="left:38.0px;width:58.0px;">20</div><div class="c" style="left:96.0px;width:87.0px;">202601</div><div class="c" style="left:183.0px;width:108.0px;"></div><div class="c" style="left:291.0px;width:130.0px;"><span style="position:absolute;left:53.6px">1,6896</span></div><div class="c" style="left:421.0px;width:144.0px;"></div><div class="c r" style="left:565.0px;width:108.0px;">0.00</div><div class="c r" style="left:673.0px;width:108.0px;">6,253.00</div><div class="c r" style="left:781.0px;width:87.0px;">1,202</div><div class="c" style="left:868.0px;width:86.0px;"></div><div class="c" style="left:954.0px;width:130.0px;"><span class="blue"></span></div><div class="c" style="left:1084.0px;width:101.0px;"><span style="letter-spacing:.35px">2026-01-29</span></div><div class="c" style="left:1185.0px;width:119.0px;justify-content:flex-start;padding-left:18.5px;"><span style="letter-spacing:.1px">YHRJZ2026</span></div></div>
<div class="row" style="top:506.80px;background:#fafafa"><div class="c" style="left:0.0px;width:38.0px;border-left:none;"><div class="c z6b"></div></div><div class="c z6" style="left:38.0px;width:58.0px;">21</div><div class="c z6" style="left:96.0px;width:87.0px;">202601</div><div class="c z6" style="left:183.0px;width:108.0px;"></div><div class="c z6" style="left:291.0px;width:130.0px;"><span style="position:absolute;left:53.6px">1,6896</span></div><div class="c z6" style="left:421.0px;width:144.0px;">1-1<span class="k">抖音回款</span></div><div class="c z6 r" style="left:565.0px;width:108.0px;">193.03</div><div class="c z6 r" style="left:673.0px;width:108.0px;">0.00</div><div class="c z6 r" style="left:781.0px;width:87.0px;">1,205</div><div class="c z6" style="left:868.0px;width:86.0px;"></div><div class="c z6" style="left:954.0px;width:130.0px;"><span class="blue"></span></div><div class="c z6" style="left:1084.0px;width:101.0px;"><span style="letter-spacing:.35px">2026-01-29</span></div><div class="c z6" style="left:1185.0px;width:119.0px;justify-content:flex-start;padding-left:18.5px;"><span style="letter-spacing:.1px">YHRJZ2026</span></div></div>
<div class="row tot" style="top:522px;height:24px;background:#f1f4f8;border-bottom:1px solid #ebebf0"><div class="c" style="left:0.0px;width:38.0px;border-left:none;"></div><div class="c" style="left:38.0px;width:58.0px;"><span class="k">总计</span></div><div class="c" style="left:96.0px;width:87.0px;"></div><div class="c" style="left:183.0px;width:108.0px;"></div><div class="c" style="left:291.0px;width:130.0px;"></div><div class="c" style="left:421.0px;width:144.0px;"></div><div class="c " style="left:565.0px;width:108.0px;">277,047.66</div><div class="c " style="left:673.0px;width:108.0px;">294,470.03</div><div class="c " style="left:781.0px;width:87.0px;"></div><div class="c" style="left:868.0px;width:86.0px;"></div><div class="c" style="left:954.0px;width:130.0px;"></div><div class="c" style="left:1084.0px;width:101.0px;"></div><div class="c" style="left:1185.0px;width:119.0px;justify-content:flex-start;padding-left:18.5px;"></div></div>
</div>
<div class="a" style="left:439.5px;top:85px;width:26.5px;height:493px;background:#fafafa;z-index:7"></div>
<div class="a" style="left:928px;top:85px;width:39.5px;height:497px;background:#fafafa;z-index:7"></div>
<div class="a" style="left:117px;top:577px;width:615px;height:4px;border-radius:2px;background:#d4d4d7;z-index:5"></div>
<div class="a" style="left:1344.5px;top:86px;width:3.5px;height:200px;border-radius:2px;background:#d6d6d9"></div>
<div class="a" style="left:453.6px;top:56.6px;width:94px;height:76px;background:#fff;border-radius:4px;box-shadow:0 1px 5px rgba(0,0,0,.13)"></div>
<div class="a" style="left:497px;top:53px;width:8px;height:8px;background:#fff;transform:rotate(45deg);box-shadow:-1px -1px 2px rgba(0,0,0,.06)"></div>
<div class="a" style="left:460px;top:58px;width:82px;height:8px;background:#fff"></div>
<div class="a pop" style="left:465.5px;top:64px;line-height:15px;font-size:10.75px;color:#6a6a6a;white-space:nowrap;font-weight:500"><span class="k">银行对账单导入</span></div>
<div class="a pop" style="left:465.5px;top:86.7px;line-height:15px;font-size:10.75px;color:#6a6a6a;white-space:nowrap;font-weight:500"><span class="k">第三方账单导入</span></div>
<div class="a pop" style="left:465.5px;top:109.6px;line-height:15px;font-size:10.75px;color:#6a6a6a;white-space:nowrap;font-weight:500"><span class="k">模板导入</span></div>
<div class="a" style="left:130.4px;top:606.3px;width:16.6px;height:20px;background:#f4f4f5;border-radius:2px;color:#444;font-size:9.6px;line-height:17px;text-align:center;"><svg width="6" height="10" viewBox="0 0 6 10" style="margin-top:5px"><path d="M5 0.8 L1 5 L5 9.2" fill="none" stroke="#b8b8bc" stroke-width="1"/></svg></div>
<div class="a" style="left:153.4px;top:606.3px;width:17px;height:20px;background:#2a6bb1;border-radius:2px;color:#fff;font-size:9.6px;line-height:17px;text-align:center;font-weight:bold">1</div>
<div class="a" style="left:176.6px;top:606.3px;width:16.6px;height:20px;background:#f0f0f2;border-radius:2px;color:#444;font-size:9.6px;line-height:17px;text-align:center;">2</div>
<div class="a" style="left:199.5px;top:606.3px;width:16.6px;height:20px;background:#f0f0f2;border-radius:2px;color:#444;font-size:9.6px;line-height:17px;text-align:center;">3</div>
<div class="a" style="left:222.4px;top:606.3px;width:16.9px;height:20px;background:#f0f0f2;border-radius:2px;color:#444;font-size:9.6px;line-height:17px;text-align:center;"><svg width="6" height="10" viewBox="0 0 6 10" style="margin-top:5px"><path d="M1 0.8 L5 5 L1 9.2" fill="none" stroke="#444" stroke-width="1"/></svg></div>
<div class="a pg" style="left:254px;top:607px;line-height:16px;font-size:9.4px;color:#555"><span class="k">前往</span></div>
<div class="a" style="left:277.5px;top:606.5px;width:39.5px;height:22px;border:1px solid #dcdfe6;border-radius:3px;text-align:center;font-size:9.6px;line-height:15px;color:#444">1</div>
<div class="a pg" style="left:323.5px;top:607px;line-height:16px;font-size:9.4px;color:#555"><span class="k">页</span></div>
<div class="a" style="left:343.8px;top:606.5px;width:71.4px;height:22px;border:1px solid #dcdfe6;border-radius:3px;font-size:9.5px;line-height:15px;color:#555;padding-left:3.5px">50<span class="k">条</span>/<span class="k">页</span></div>
<svg class="a" style="left:400.5px;top:612px" width="9" height="6" viewBox="0 0 9 6"><path d="M0.5 0.8 L4.5 4.8 L8.5 0.8" fill="none" stroke="#aaa" stroke-width="1"/></svg>
<div class="a pg" style="left:427px;top:607px;line-height:16px;font-size:9.4px;color:#555"><span class="k">共</span> 103 <span class="k">条</span></div>
<div class="a" style="left:1349.5px;top:0;width:3px;height:623px;background:#fff"></div>
<div class="a" style="left:98px;top:0;width:1px;height:623px;background:#f0f0f0"></div>
</body></html>
